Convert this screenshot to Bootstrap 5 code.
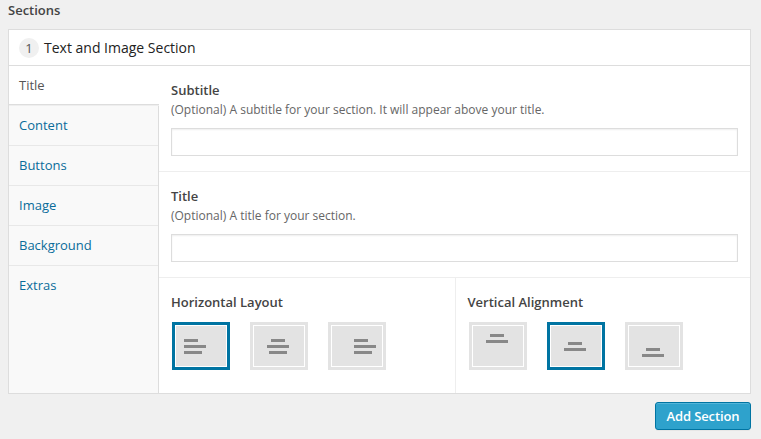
<!DOCTYPE html>
<html lang="en">
<head>
<meta charset="utf-8">
<meta name="viewport" content="width=device-width, initial-scale=1">
<title>Sections</title>
<link href="https://cdn.jsdelivr.net/npm/bootstrap@5.3.0/dist/css/bootstrap.min.css" rel="stylesheet">
<style>
body{background:#f0f0f0;color:#444;font-family:"Open Sans",sans-serif;font-size:13px;line-height:18px;width:761px;height:439px;overflow:hidden;padding:1px 10px 0 8px}
h1,h2,label,legend{font-size:13px;font-weight:600;line-height:18px;color:#444;margin:0}
.panel{background:#fff;border:1px solid #ddd;height:365px;margin-top:10px}
.panel-top{height:36px;border-bottom:1px solid #ddd;padding:0 10px;font-size:14px;color:#222}
.num{width:20px;height:20px;background:#f0f0f0;color:#555;font-size:13px;margin-right:5px}
.tabs{width:150px;flex:none;background:#f9f9f9;border-right:1px solid #ddd}
.tabs .nav-link{height:40px;padding:10px;border-bottom:1px solid #e8e8e8;color:#0a6c9a;line-height:19px}
.tabs .nav-link.active{height:39px;background:#fff;color:#555;border-bottom:1px solid #ddd;margin-right:-1px;box-shadow:0 1px 0 #eee;margin-bottom:1px}
.tabs .nav-link:last-child{border:0}
.field{height:106px;border-bottom:1px solid #eee;padding:15px 12px 0}
.field p{font-size:12px;line-height:18px;color:#666;margin:2px 0 9px}
.form-control{height:28px;border:1px solid #ddd;border-radius:0;box-shadow:inset 0 1px 2px rgba(0,0,0,.07);font-size:13px;padding:3px 5px}
.choice{padding:15px 12px 0}
.choice-left{width:297px;border-right:1px solid #eee}
.choice+.choice h2{margin-left:-.5px}
.tiles{gap:20px;margin:11px 0 0 1px}
.tile{width:58px;height:48px;border:3px solid #e3e3e3;background:#fff;padding:1px;border-radius:0}
.tile.selected{border-color:#0074a2}
.tile svg{display:block;background:#e3e3e3;fill:#888}
.btn-add{height:28px;width:96px;background:#2ea2cc;border:1px solid #0074a2;border-radius:3px;color:#fff;font-size:13px;font-weight:600;letter-spacing:-.12px;line-height:26px;padding:0;box-shadow:inset 0 1px 0 rgba(120,200,230,.5),0 1px 0 rgba(0,0,0,.04);margin-top:8px}
</style>
</head>
<body>
<h1>Sections</h1>
<main class="panel d-flex flex-column">
  <header class="panel-top d-flex align-items-center"><span class="num rounded-circle d-flex align-items-center justify-content-center">1</span><span>Text and Image Section</span></header>
  <div class="d-flex flex-grow-1">
    <nav class="tabs nav flex-column flex-nowrap">
      <a class="nav-link active" href="#">Title</a>
      <a class="nav-link" href="#">Content</a>
      <a class="nav-link" href="#">Buttons</a>
      <a class="nav-link" href="#">Image</a>
      <a class="nav-link" href="#">Background</a>
      <a class="nav-link" href="#">Extras</a>
    </nav>
    <div class="flex-grow-1 d-flex flex-column">
      <div class="field"><label class="d-block" for="subtitle">Subtitle</label><p>(Optional) A subtitle for your section. It will appear above your title.</p><input id="subtitle" class="form-control" type="text"></div>
      <div class="field"><label class="d-block" for="title">Title</label><p>(Optional) A title for your section.</p><input id="title" class="form-control" type="text"></div>
      <div class="d-flex flex-grow-1">
        <div class="choice choice-left">
          <h2>Horizontal Layout</h2>
          <div class="tiles d-flex">
            <button class="tile selected" type="button" aria-label="Left"><svg width="50" height="40"><path d="M8 13h14v3H8zM8 19h22v3H8zM8 25h18v3H8z"/></svg></button>
            <button class="tile" type="button" aria-label="Center"><svg width="50" height="40"><path d="M17 13h14v3H17zM13 19h22v3H13zM15 25h18v3H15z"/></svg></button>
            <button class="tile" type="button" aria-label="Right"><svg width="50" height="40"><path d="M22 13h14v3H22zM22 19h22v3H22zM22 25h18v3H22z"/></svg></button>
          </div>
        </div>
        <div class="choice">
          <h2>Vertical Alignment</h2>
          <div class="tiles d-flex">
            <button class="tile" type="button" aria-label="Top"><svg width="50" height="40"><path d="M17 8h14v3H17zM13 14h22v3H13z"/></svg></button>
            <button class="tile selected" type="button" aria-label="Middle"><svg width="50" height="40"><path d="M17 16h14v3H17zM13 22h22v3H13z"/></svg></button>
            <button class="tile" type="button" aria-label="Bottom"><svg width="50" height="40"><path d="M17 22h14v3H17zM13 28h22v3H13z"/></svg></button>
          </div>
        </div>
      </div>
    </div>
  </div>
</main>
<div class="d-flex justify-content-end"><button class="btn btn-add" type="button">Add Section</button></div>
<script src="https://cdn.jsdelivr.net/npm/bootstrap@5.3.0/dist/js/bootstrap.bundle.min.js"></script>
</body>
</html>
